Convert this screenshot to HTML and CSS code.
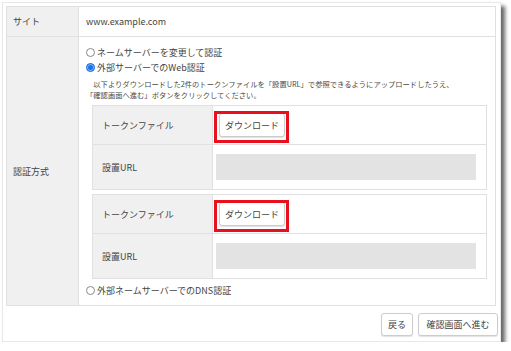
FILE: index.html
```html
<!DOCTYPE html>
<html lang="ja">
<head>
  <meta charset="UTF-8" />
  <meta name="viewport" content="width=device-width, initial-scale=1.0"/>
  <title>認証方式の設定</title>
  <link rel="stylesheet" href="styles.css">
</head>
<body>

  <div class="panel">
    <table class="form-table">
      <tr class="row-site">
        <th class="label">サイト</th>
        <td class="value">www.example.com</td>
      </tr>
      <tr class="row-auth">
        <th class="label">認証方式</th>
        <td class="value">
          <label class="choice"><input type="radio" name="auth" value="ns">ネームサーバーを変更して認証</label>
          <label class="choice"><input type="radio" name="auth" value="web" checked>外部サーバーでのWeb認証</label>

          <p class="note">以下よりダウンロードした2件のトークンファイルを「設置URL」で参照できるようにアップロードしたうえ、<br>「確認画面へ進む」ボタンをクリックしてください。</p>

          <table class="token-table">
            <tr class="row-file">
              <th>トークンファイル</th>
              <td><span class="highlight"><button type="button" class="btn btn-download">ダウンロード</button></span></td>
            </tr>
            <tr class="row-url">
              <th>設置URL</th>
              <td><div class="url-field"></div></td>
            </tr>
          </table>

          <table class="token-table">
            <tr class="row-file">
              <th>トークンファイル</th>
              <td><span class="highlight"><button type="button" class="btn btn-download">ダウンロード</button></span></td>
            </tr>
            <tr class="row-url">
              <th>設置URL</th>
              <td><div class="url-field"></div></td>
            </tr>
          </table>

          <label class="choice choice-last"><input type="radio" name="auth" value="dns">外部ネームサーバーでのDNS認証</label>
        </td>
      </tr>
    </table>

    <div class="actions">
      <button type="button" class="btn btn-back">戻る</button>
      <button type="button" class="btn btn-next">確認画面へ進む</button>
    </div>
  </div>

</body>
</html>
```

FILE: styles.css
```css
body {
  margin: 0;
  padding: 2px 0 0 2px;
  background-color: #fff;
  color: #444;
  font-family: "Noto Sans CJK JP", "Noto Sans", sans-serif;
  font-size: 9px;
}

.panel {
  width: 499px;
  height: 340px;
  box-sizing: border-box;
  border: 1px solid #e8e8e8;
  padding: 3px 2px 0 3px;
  background-color: #fff;
  box-shadow: 4px 4px 4px rgba(0,0,0,0.6);
}

.form-table {
  width: 490px;
  border-collapse: collapse;
}

.form-table .label,
.form-table .value {
  border: 1px solid #e0e0e0;
}

.form-table .label {
  width: 66px;
  padding: 0 0 0 6px;
  background-color: #f0f0f0;
  font-weight: normal;
  text-align: left;
  vertical-align: middle;
}

.form-table .value {
  padding: 0 8px 0 7px;
}

.row-site .label,
.row-site .value {
  height: 29px;
}

.row-auth .value {
  vertical-align: top;
  padding-top: 8px;
  padding-bottom: 7px;
}

.choice {
  display: flex;
  align-items: center;
  height: 15px;
}

.choice input {
  appearance: none;
  -webkit-appearance: none;
  width: 9px;
  height: 9px;
  margin: 0 2px 0 0;
  border: 1px solid #888;
  border-radius: 50%;
  box-sizing: border-box;
  background-color: #fff;
}

.choice input:checked {
  border-color: #1a73e8;
  background-color: #1a73e8;
  box-shadow: inset 0 0 0 1px #8fbaf5;
}

.choice-last {
  margin-top: 4px;
}

.note {
  margin: 4px 0 4px;
  font-size: 7.3px;
  line-height: 11px;
  text-indent: 1em;
  color: #4a4a4a;
}

.token-table {
  width: 395px;
  margin-left: 6px;
  border-collapse: collapse;
}

.token-table + .token-table {
  margin-top: 4px;
}

.token-table th,
.token-table td {
  border: 1px solid #e0e0e0;
}

.token-table th {
  width: 110px;
  padding: 0 0 0 9px;
  background-color: #f0f0f0;
  font-weight: normal;
  text-align: left;
}

.token-table td {
  padding: 0 10px 0 6px;
}

.row-file th,
.row-file td {
  height: 38px;
}

.row-url th,
.row-url td {
  height: 44px;
}

.row-url td {
  padding-left: 3px;
}

.url-field {
  height: 26px;
  background-color: #e3e3e3;
}

.btn {
  height: 24px;
  padding: 0;
  border: 1px solid #ccc;
  border-radius: 3px;
  background-color: #fff;
  box-shadow: 0 1px 1px rgba(0,0,0,0.12);
  color: #444;
  font-family: inherit;
  font-size: 9px;
}

.btn-download {
  display: block;
  width: 66px;
}

.highlight {
  position: relative;
  display: inline-block;
  vertical-align: middle;
}

.highlight::after {
  content: "";
  position: absolute;
  left: -5px;
  right: -4px;
  top: -2px;
  bottom: -6px;
  border: 3px solid #e8101c;
}

.actions {
  display: flex;
  justify-content: flex-end;
  gap: 5px;
  margin-top: 7px;
}

.btn-back {
  width: 32px;
  height: 23px;
}

.btn-next {
  width: 80px;
  height: 23px;
}
```
